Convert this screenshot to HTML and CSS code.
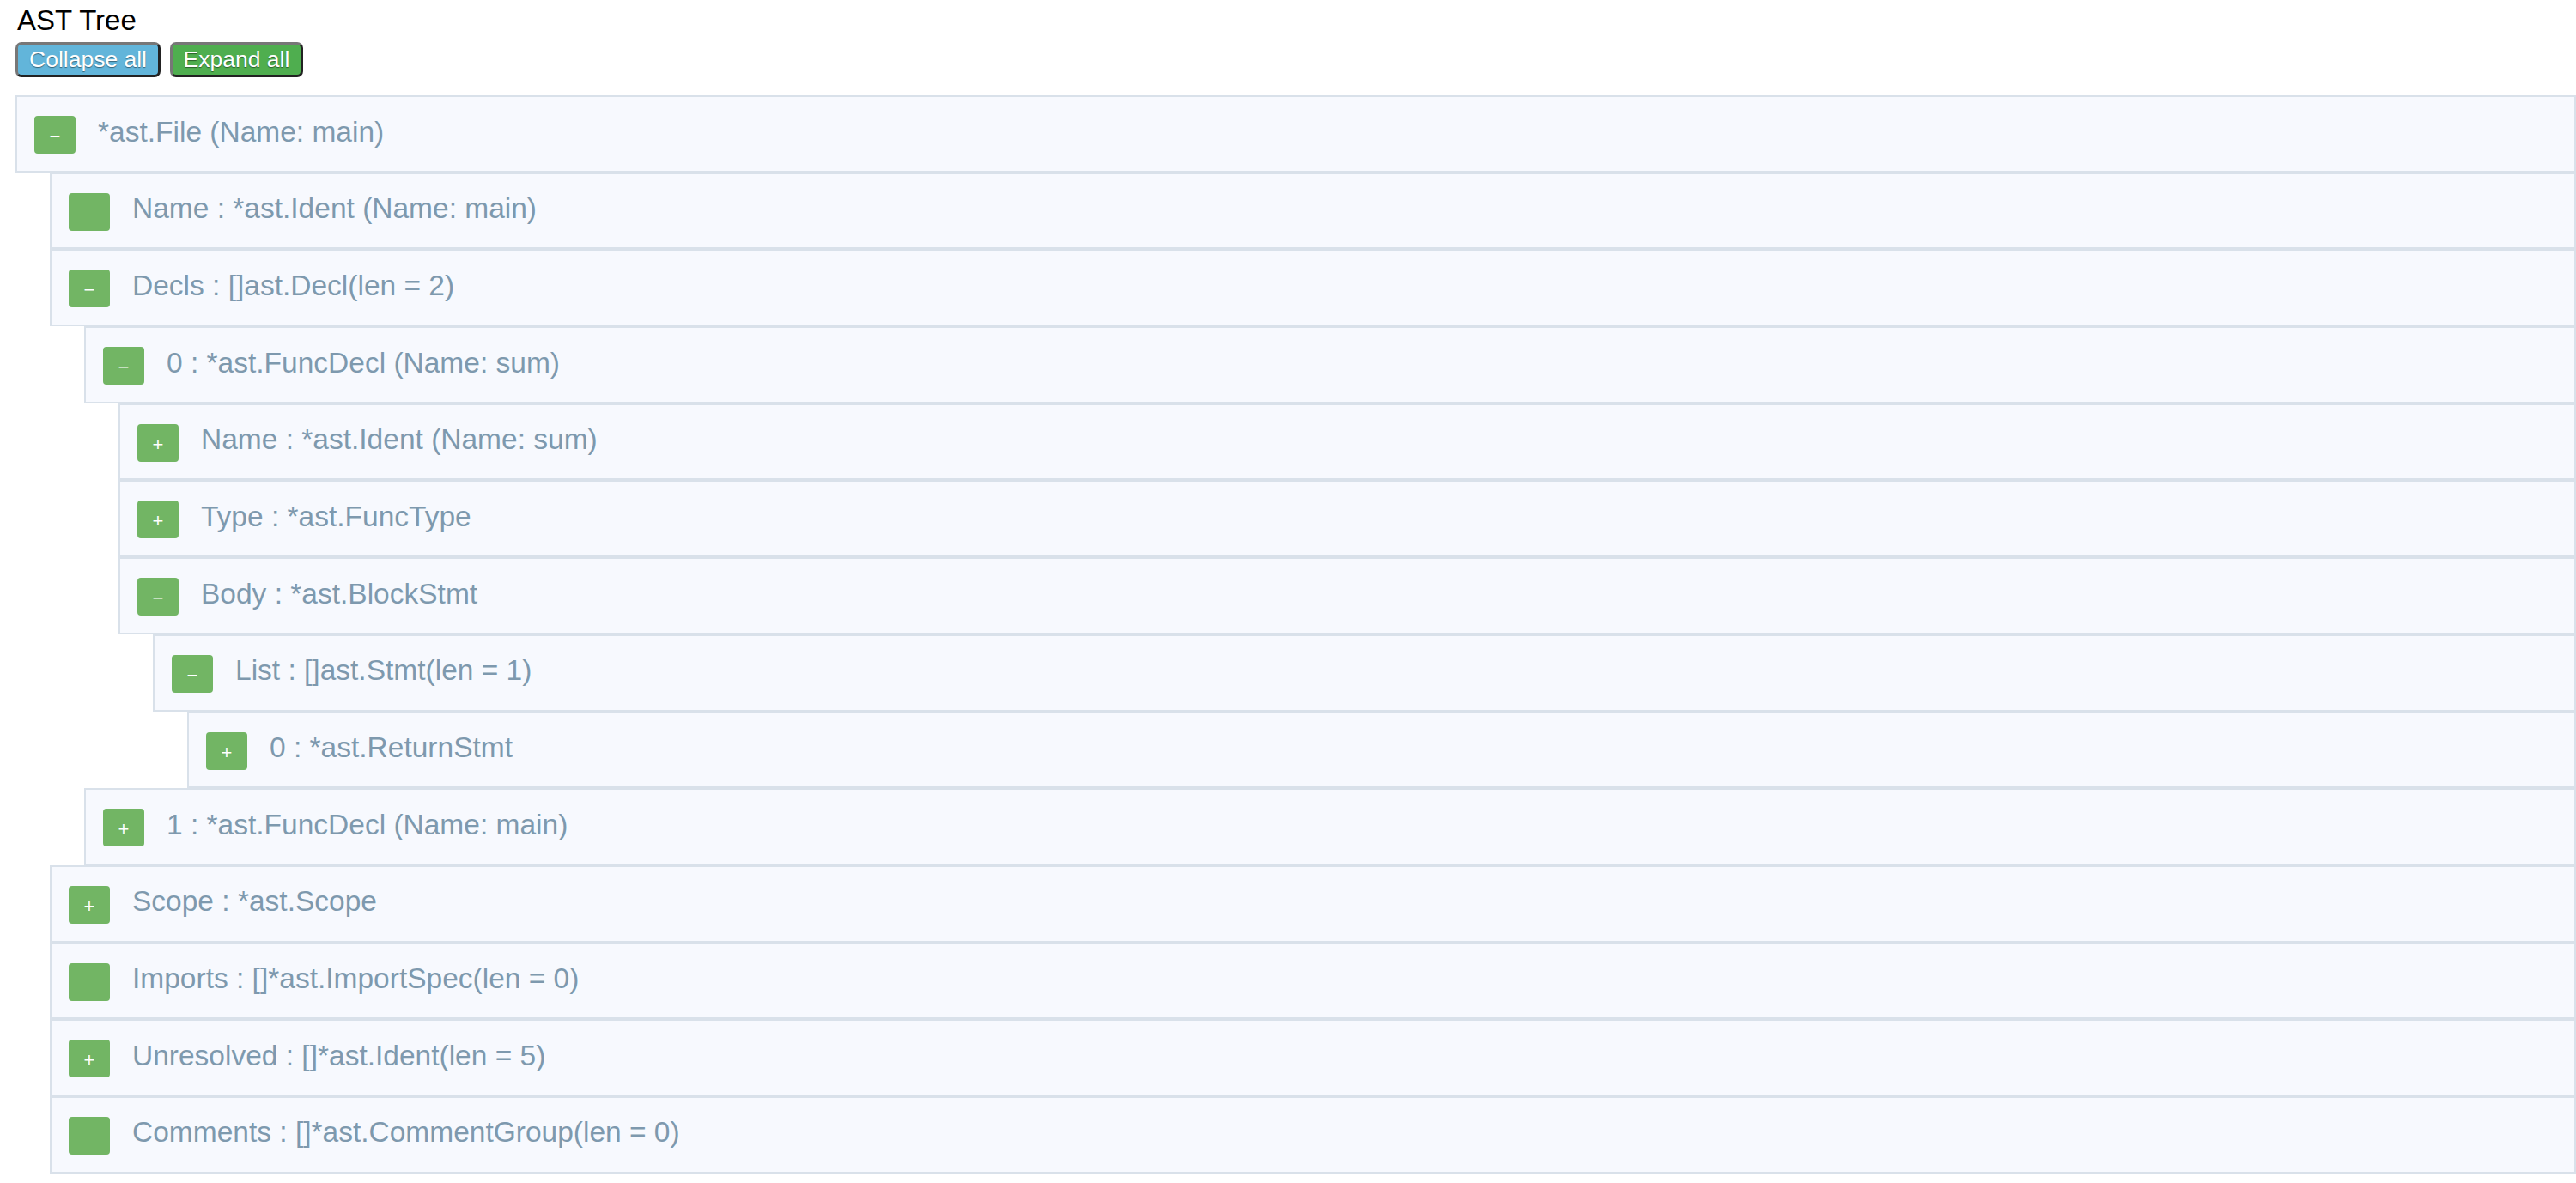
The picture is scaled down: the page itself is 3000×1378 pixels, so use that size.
FILE: index.html
```html
<!DOCTYPE html>
<html>
<head>
<meta charset="utf-8">
<title>AST Tree</title>
<link rel="stylesheet" href="styles.css">
</head>
<body>
<div class="page">
  <div class="title">AST Tree</div>
  <div class="actions">
    <button class="btn btn-collapse">Collapse all</button>
    <button class="btn btn-expand">Expand all</button>
  </div>
  <div class="tree">
    <div class="node">
      <div class="row"><span class="toggle">−</span><span class="label">*ast.File (Name: main)</span></div>
      <div class="children">
        <div class="node">
          <div class="row"><span class="toggle"></span><span class="label">Name : *ast.Ident (Name: main)</span></div>
        </div>
        <div class="node">
          <div class="row"><span class="toggle">−</span><span class="label">Decls : []ast.Decl(len = 2)</span></div>
          <div class="children">
            <div class="node">
              <div class="row"><span class="toggle">−</span><span class="label">0 : *ast.FuncDecl (Name: sum)</span></div>
              <div class="children">
                <div class="node">
                  <div class="row"><span class="toggle">+</span><span class="label">Name : *ast.Ident (Name: sum)</span></div>
                </div>
                <div class="node">
                  <div class="row"><span class="toggle">+</span><span class="label">Type : *ast.FuncType</span></div>
                </div>
                <div class="node">
                  <div class="row"><span class="toggle">−</span><span class="label">Body : *ast.BlockStmt</span></div>
                  <div class="children">
                    <div class="node">
                      <div class="row"><span class="toggle">−</span><span class="label">List : []ast.Stmt(len = 1)</span></div>
                      <div class="children">
                        <div class="node">
                          <div class="row"><span class="toggle">+</span><span class="label">0 : *ast.ReturnStmt</span></div>
                        </div>
                      </div>
                    </div>
                  </div>
                </div>
              </div>
            </div>
            <div class="node">
              <div class="row"><span class="toggle">+</span><span class="label">1 : *ast.FuncDecl (Name: main)</span></div>
            </div>
          </div>
        </div>
        <div class="node">
          <div class="row"><span class="toggle">+</span><span class="label">Scope : *ast.Scope</span></div>
        </div>
        <div class="node">
          <div class="row"><span class="toggle"></span><span class="label">Imports : []*ast.ImportSpec(len = 0)</span></div>
        </div>
        <div class="node">
          <div class="row"><span class="toggle">+</span><span class="label">Unresolved : []*ast.Ident(len = 5)</span></div>
        </div>
        <div class="node">
          <div class="row"><span class="toggle"></span><span class="label">Comments : []*ast.CommentGroup(len = 0)</span></div>
        </div>
      </div>
    </div>
  </div>
</div>
</body>
</html>
```
FILE: styles.css
```css
html, body {
  margin: 0;
  padding: 0;
  background: #ffffff;
}

body {
  font-family: "Liberation Sans", Arial, sans-serif;
  overflow: hidden;
}

.page {
  padding: 6px 0 0 18px;
}

.title {
  font-size: 33px;
  line-height: 36px;
  color: #000000;
  padding-left: 2px;
}

.actions {
  display: flex;
  gap: 11px;
  margin-top: 7px;
}

.btn {
  font-family: "Liberation Sans", Arial, sans-serif;
  font-size: 26.5px;
  line-height: 35px;
  height: 41px;
  padding: 0 12px;
  color: #ffffff;
  border: 3px solid;
  border-color: #777777 #222222 #222222 #777777;
  border-radius: 7px;
  text-shadow: 0 1px 1px rgba(0, 0, 0, 0.45);
  box-sizing: border-box;
  cursor: pointer;
}

.btn-collapse {
  background: #62b5da;
  width: 169px;
}

.btn-expand {
  background: #4fae4f;
  width: 155px;
}

.tree {
  margin-top: 21px;
}

.row {
  display: flex;
  align-items: flex-start;
  height: 85.7px;
  border: 2px solid #d9e1ea;
  background: #f7f9fe;
  padding-left: 20px;
}

.children {
  padding-left: 40px;
}

.toggle {
  flex: 0 0 auto;
  width: 48px;
  height: 44px;
  margin-top: 22px;
  background: #72b564;
  border-radius: 4px;
  color: #ffffff;
  font-size: 22px;
  line-height: 48px;
  text-align: center;
}

.label {
  margin-left: 26px;
  margin-top: 21.5px;
  font-size: 33.5px;
  line-height: 38px;
  color: #7e99ae;
  white-space: nowrap;
}
```
